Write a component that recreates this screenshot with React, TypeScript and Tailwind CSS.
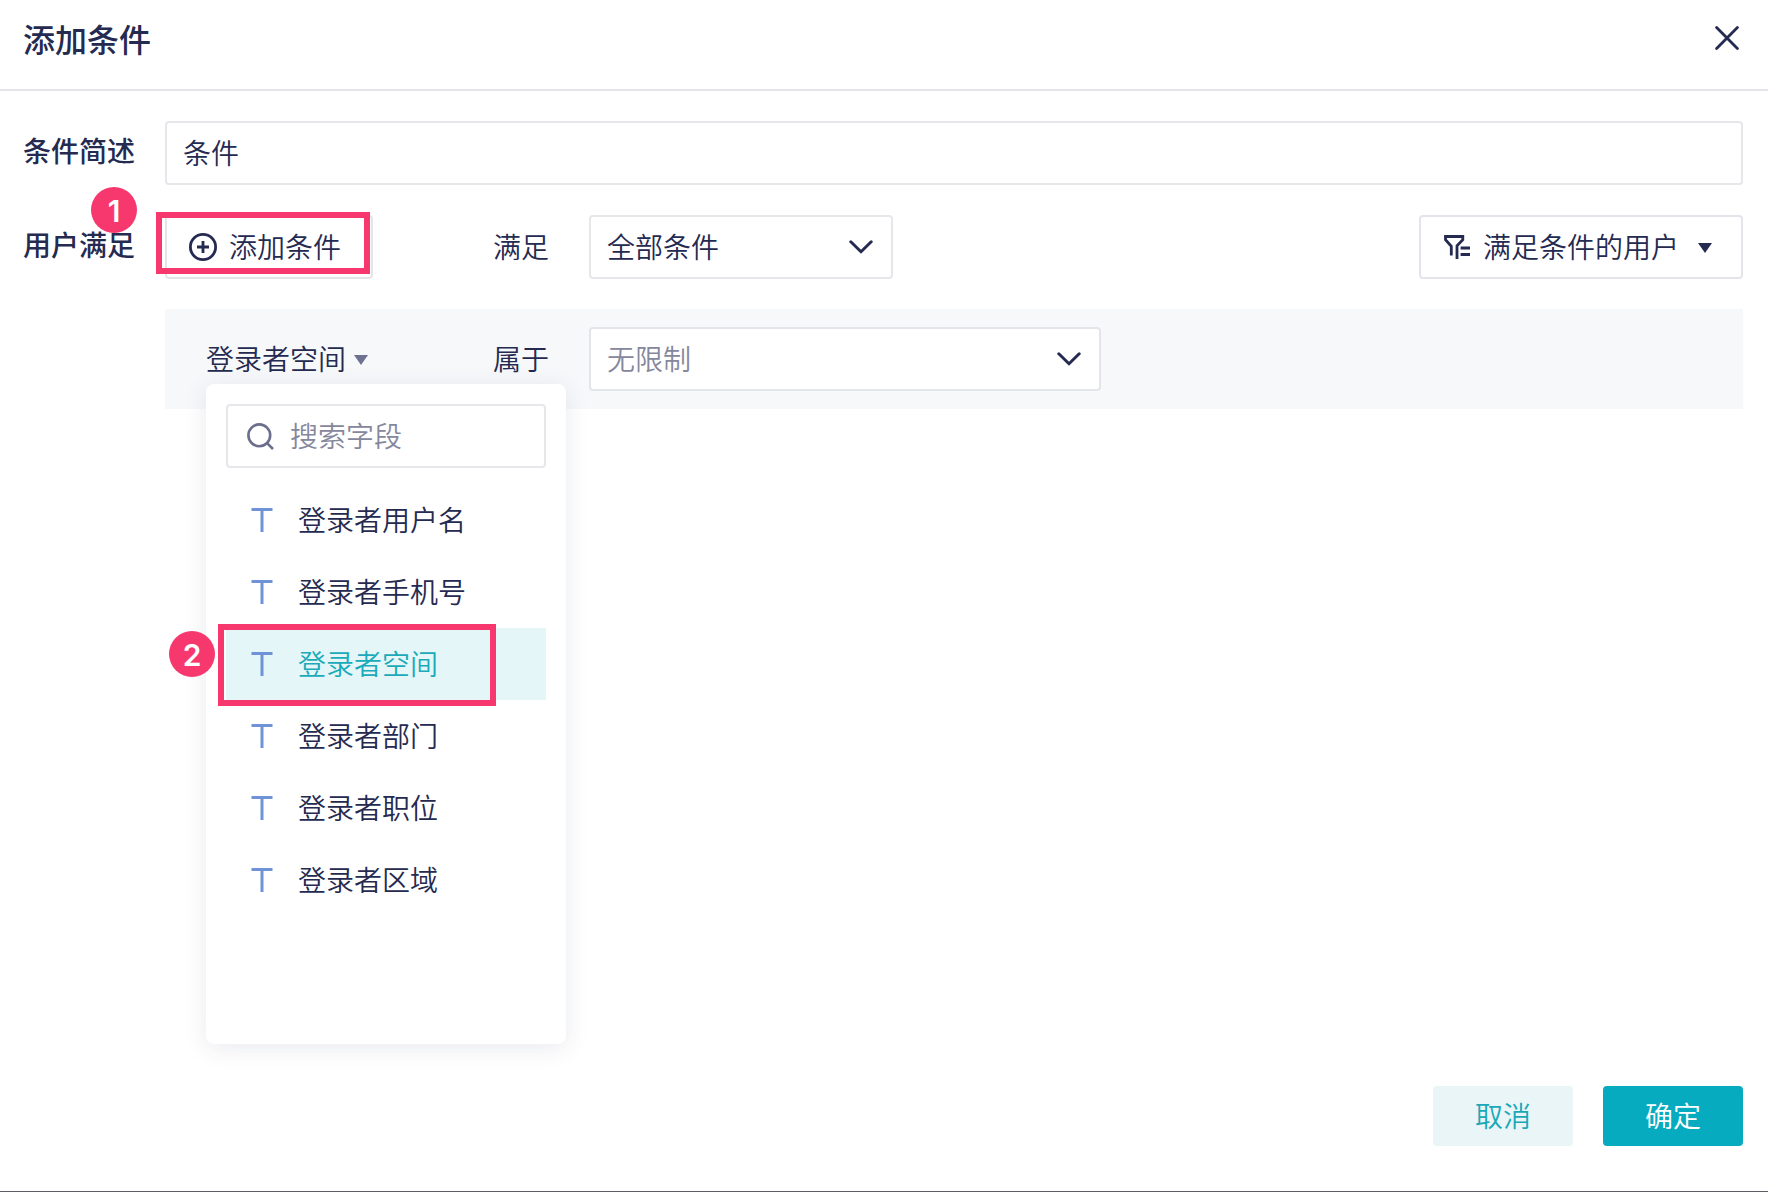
import React from "react";

const fields = ["登录者用户名", "登录者手机号", "登录者空间", "登录者部门", "登录者职位", "登录者区域"];
const selectedField = "登录者空间";

function Chevron() {
  return (
    <svg
      className="pointer-events-none absolute right-[20px] top-1/2 -mt-2 h-4 w-6"
      viewBox="0 0 24 16"
      fill="none"
      stroke="#252a50"
      strokeWidth="3"
      strokeLinecap="round"
      strokeLinejoin="round"
      aria-hidden="true"
    >
      <path d="M1.8 2.8 12 12.8 22.2 2.8" />
    </svg>
  );
}

function Caret({ className }: { className: string }) {
  return (
    <svg className={className} width="14" height="12" viewBox="0 0 14 12" fill="currentColor" aria-hidden="true">
      <path d="M0 2h14L7 12z" />
    </svg>
  );
}

function CloseIcon() {
  return (
    <svg width="24" height="24" viewBox="0 0 24 24" fill="none" stroke="currentColor" strokeWidth="2.8" strokeLinecap="round" aria-hidden="true">
      <path d="M1.6 1.6 22.4 22.4M22.4 1.6 1.6 22.4" />
    </svg>
  );
}

function PlusCircle() {
  return (
    <svg width="28" height="28" viewBox="0 0 28 28" fill="none" stroke="currentColor" strokeWidth="2.8" aria-hidden="true">
      <circle cx="14" cy="14" r="12.6" />
      <path d="M14 8v12M8 14h12" />
    </svg>
  );
}

function FilterIcon() {
  return (
    <svg width="26" height="24" viewBox="0 0 26 24" fill="none" stroke="currentColor" strokeWidth="2.8" aria-hidden="true">
      <path d="M7.3 20.6V11.2L1.5 4.8V1.5H18.8V4.8L13 10.8V24" />
      <path d="M16.6 13H26M16.6 19.5H26" />
    </svg>
  );
}

function SearchIcon() {
  return (
    <svg className="shrink-0" width="27" height="27" viewBox="0 0 27 27" fill="none" stroke="#6c6f8b" strokeWidth="2.6" aria-hidden="true">
      <circle cx="12.3" cy="12.3" r="10.9" />
      <path d="M19.8 19.8 26 26" />
    </svg>
  );
}

function TextTypeIcon() {
  return (
    <svg width="22" height="24" viewBox="0 0 22 24" fill="none" stroke="#7092d6" strokeWidth="3" aria-hidden="true">
      <path d="M0.5 1.5h21M11 1.5V24" />
    </svg>
  );
}

function Badge({ children, className }: { children: React.ReactNode; className: string }) {
  return (
    <span
      className={`absolute z-30 flex size-[46px] items-center justify-center rounded-full bg-[#f6386f] pt-0.5 font-['Inter',sans-serif] text-[30px] leading-none font-semibold text-white ${className}`}
    >
      {children}
    </span>
  );
}

function FieldMenu() {
  return (
    <div className="absolute left-0 top-[57px] z-10 w-[360px] rounded-lg bg-white px-5 pt-5 pb-32 shadow-[0_4px_24px_rgba(40,45,90,0.10)]">
      <label className="mb-4 flex h-16 items-center gap-4 rounded border-2 border-[#e6e7ea] pl-[19px]">
        <SearchIcon />
        <input
          type="text"
          aria-label="搜索字段"
          placeholder="搜索字段"
          className="w-full min-w-0 bg-transparent pb-0.5 outline-none placeholder:text-[#85889d]"
        />
      </label>
      <ul>
        {fields.map((field) => {
          const selected = field === selectedField;
          return (
            <li key={field} className="relative">
              <button
                type="button"
                className={
                  selected
                    ? "flex h-[72px] w-full items-center gap-[25px] bg-[#e4f6f8] pl-[25px] text-[#1aaab9]"
                    : "flex h-[72px] w-full items-center gap-[25px] pl-[25px]"
                }
              >
                <TextTypeIcon />
                <span className="pb-0.5">{field}</span>
              </button>
              {selected && (
                <>
                  <span className="pointer-events-none absolute -top-1 -bottom-[6px] -left-2 w-[278px] border-6 border-[#f6386f]" />
                  <Badge className="-left-[57px] top-[3px]">2</Badge>
                </>
              )}
            </li>
          );
        })}
      </ul>
    </div>
  );
}

export default function App() {
  return (
    <div className="flex min-h-screen flex-col border-b border-[#5c5c66] bg-white font-['Noto_Sans_CJK_SC',sans-serif] text-[28px] leading-[42px] font-[350] text-[#252a50]">
      <header className="flex items-center justify-between border-b-2 border-[#e4e5ea] pt-[14px] pr-[29px] pb-[27px] pl-[23px]">
        <h1 className="text-[32px] leading-[48px] font-medium">添加条件</h1>
        <button type="button" aria-label="关闭">
          <CloseIcon />
        </button>
      </header>

      <main className="flex flex-1 flex-col gap-[30px] pt-[30px] pr-[25px] pl-[23px]">
        <div className="flex items-center">
          <label htmlFor="summary" className="w-[142px] shrink-0 pb-1.5 font-medium">
            条件简述
          </label>
          <input
            id="summary"
            type="text"
            defaultValue="条件"
            className="h-16 min-w-0 flex-1 rounded border-2 border-[#e6e7ea] px-4 pb-0.5 outline-none"
          />
        </div>

        <div className="flex items-start">
          <div className="relative flex h-16 w-[142px] shrink-0 items-center pb-1.5 font-medium">
            用户满足
            <Badge className="-top-7 left-[68px]">1</Badge>
          </div>

          <div className="flex min-w-0 flex-1 flex-col gap-[30px]">
            <div className="flex items-center">
              <div className="w-[328px] shrink-0">
                <div className="relative w-[208px]">
                  <button type="button" className="flex h-16 w-full items-center gap-3 rounded border-2 border-[#e4e5ea] pl-[22px]">
                    <PlusCircle />
                    <span className="pb-0.5">添加条件</span>
                  </button>
                  <span className="pointer-events-none absolute -top-[3px] right-[3px] bottom-[5px] -left-[9px] border-6 border-[#f6386f]" />
                </div>
              </div>
              <label htmlFor="match" className="mr-10 shrink-0 pb-0.5">
                满足
              </label>
              <div className="relative w-[304px]">
                <select id="match" className="h-16 w-full appearance-none rounded border-2 border-[#e6e7ea] bg-white px-4 pb-0.5 outline-none">
                  <option>全部条件</option>
                </select>
                <Chevron />
              </div>
              <button type="button" className="ml-auto flex h-16 shrink-0 items-center rounded border-2 border-[#e4e5ea] pr-[29px] pl-[23px]">
                <FilterIcon />
                <span className="ml-[13px] pb-0.5">满足条件的用户</span>
                <Caret className="ml-[19px]" />
              </button>
            </div>

            <div className="flex h-[100px] items-center bg-[#f7f8fa]">
              <div className="w-[328px] shrink-0 pl-[41px]">
                <div className="relative">
                  <button type="button" aria-expanded="true" className="flex h-16 items-center gap-2">
                    <span className="pb-0.5">登录者空间</span>
                    <Caret className="text-[#6e7190]" />
                  </button>
                  <FieldMenu />
                </div>
              </div>
              <label htmlFor="scope" className="mr-10 shrink-0 pb-0.5">
                属于
              </label>
              <div className="relative w-[512px]">
                <select
                  id="scope"
                  className="h-16 w-full appearance-none rounded border-2 border-[#e4e5ea] bg-white px-4 pb-0.5 text-[#85889d] outline-none"
                >
                  <option>无限制</option>
                </select>
                <Chevron />
              </div>
            </div>
          </div>
        </div>
      </main>

      <footer className="flex justify-end gap-[30px] pr-[25px] pb-[45px]">
        <button type="button" className="h-[60px] w-[140px] rounded bg-[#e9f5f7] pb-0.5 text-[#1aa8b8]">
          取消
        </button>
        <button type="button" className="h-[60px] w-[140px] rounded bg-[#07abc0] pb-0.5 text-white">
          确定
        </button>
      </footer>
    </div>
  );
}
